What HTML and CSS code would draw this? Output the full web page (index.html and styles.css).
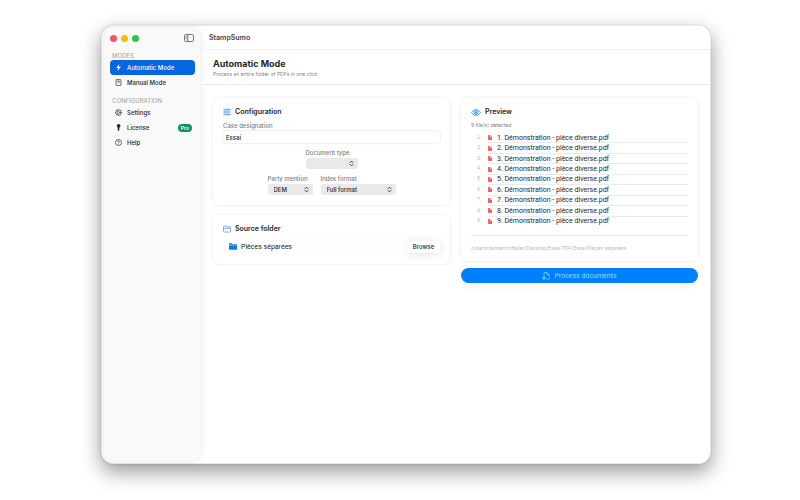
FILE: index.html
```html
<!DOCTYPE html>
<html lang="en">
<head>
<meta charset="utf-8">
<title>StampSumo</title>
<link rel="stylesheet" href="styles.css">
</head>
<body>
<svg class="sprite" aria-hidden="true">
  <symbol id="chevrons" viewBox="0 0 6 8"><path d="M1.2 3 3 1.2 4.800 3M1.2 5 3 6.800 4.800 5" fill="none" stroke="currentColor" stroke-width="1" stroke-linecap="round" stroke-linejoin="round"/></symbol>
  <symbol id="doc" viewBox="0 0 10 12"><path d="M1.500 0H5v5h5v5.500A1.500 1.500 0 0 1 8.500 12h-7A1.500 1.500 0 0 1 0 10.500v-9A1.500 1.500 0 0 1 1.500 0ZM6.200 0 10 3.900H6.200Z" fill="currentColor"/></symbol>
</svg>
<div class="window">
  <aside class="sidebar">
    <div class="controls">
      <span class="light red"></span><span class="light yellow"></span><span class="light green"></span>
      <button class="toggle" aria-label="Toggle sidebar"><svg viewBox="0 0 20 16"><g fill="none" stroke="currentColor" stroke-width="1.600"><rect x="1" y="1" width="18" height="14" rx="2.500"/><path d="M7.500 1v14M3.200 4.500h2M3.200 7h2M3.200 9.500h2"/></g></svg></button>
    </div>
    <h2 class="group">MODES</h2>
    <nav>
      <a class="item active" href="#auto"><svg viewBox="0 0 16 16"><path d="M10 0 2.500 9h4.700L6 16l7.500-9.500H8.800Z" fill="currentColor"/></svg>Automatic Mode</a>
      <a class="item" href="#manual"><svg viewBox="0 0 16 16"><g fill="none" stroke="currentColor" stroke-width="1.500"><rect x="2.500" y="1" width="11" height="14" rx="1.500"/><path d="M5.500 4.500h5M5.500 7h5"/></g></svg>Manual Mode</a>
    </nav>
    <h2 class="group second">CONFIGURATION</h2>
    <nav>
      <a class="item" href="#settings"><svg viewBox="0 0 16 16"><g fill="none" stroke="currentColor" stroke-width="1.400"><circle cx="8" cy="8" r="6.500"/><circle cx="8" cy="8" r="2.500"/><path d="M8 0v2M8 14v2M0 8h2M14 8h2M2.300 2.300l1.500 1.500M12.200 12.200l1.500 1.500M2.300 13.700l1.500-1.500M12.200 3.800l1.500-1.500M10.300 8h3.500M6.800 6 5 3M6.800 10 5 13"/></g></svg>Settings</a>
      <a class="item" href="#license"><svg viewBox="0 0 16 16"><path d="M8 0a4.300 4.300 0 0 1 2.300 8v1.500l-1 1 1 1.200-1 1.200.5 1L8 16l-1.800-1.500V8A4.300 4.300 0 0 1 8 0Z" fill="currentColor"/></svg>License<span class="badge">Pro</span></a>
      <a class="item" href="#help"><svg viewBox="0 0 16 16"><g fill="none" stroke="currentColor" stroke-width="1.500"><circle cx="8" cy="8" r="7"/><path d="M5.800 6.300C5.800 3.300 10.200 3.400 10.200 6.200 10.200 7.800 8 7.700 8 9.700M8 11v1.600"/></g></svg>Help</a>
    </nav>
  </aside>
  <main class="main">
    <div class="titlebar">StampSumo</div>
    <header class="header">
      <h1>Automatic Mode</h1>
      <p>Process an entire folder of PDFs in one click</p>
    </header>
    <div class="content">
      <div class="column">
        <section class="card config">
          <h3><svg viewBox="0 0 16 16"><rect x="1" y="1" width="14" height="14" rx="1" fill="#c4defc"/><path d="M1 3h14M1 8h14M1 13h14" stroke="#6fb0f9" stroke-width="1.800"/><path d="M10 1.500v3M5 6.500v3M10 11.500v3" stroke="#4f9df7" stroke-width="2.500"/></svg>Configuration</h3>
          <label for="case">Case designation</label>
          <input id="case" class="text" type="text" value="Essai">
          <div class="fields">
            <div class="field type"><label for="type">Document type</label><div class="select"><select id="type"><option></option></select><svg><use href="#chevrons"/></svg></div></div>
          </div>
          <div class="fields">
            <div class="field party"><label for="party">Party mention</label><div class="select"><select id="party"><option>DEM</option></select><svg><use href="#chevrons"/></svg></div></div>
            <div class="field format"><label for="format">Index format</label><div class="select"><select id="format"><option>Full format</option></select><svg><use href="#chevrons"/></svg></div></div>
          </div>
        </section>
        <section class="card source">
          <h3><svg viewBox="0 0 16 16"><path d="M1 12.500V3.500Q1 2 2.500 2H6l1.500 1.500H13.500Q15 3.500 15 5v7.500Q15 14 13.500 14h-11Q1 14 1 12.500ZM1 6.500h14" fill="none" stroke="#3c93f8" stroke-width="1.400"/></svg>Source folder</h3>
          <div class="picker">
            <div class="folder"><svg viewBox="0 0 16 14"><path d="M0 3.500V2Q0 .5 1.500.5H5.500L7 2h7Q16 2 16 3.500ZM0 4.700h16V12q0 1.500-1.500 1.500h-13Q0 13.500 0 12Z" fill="#087bf3"/></svg>Pièces séparées</div>
            <button class="browse">Browse</button>
          </div>
        </section>
      </div>
      <div class="column">
        <section class="card preview">
          <h3><svg viewBox="0 0 20 14"><g fill="none" stroke="#2487f7" stroke-width="1.600"><path d="M1 7Q5 1 10 1t9 6q-4 6-9 6T1 7Z"/><circle cx="10" cy="7" r="3.800"/></g><circle cx="10" cy="7" r="2" fill="#2487f7"/></svg>Preview</h3>
          <p class="count">9 file(s) detected</p>
          <ol class="files">
            <li><span class="num">1.</span><svg><use href="#doc"/></svg>1. Démonstration - pièce diverse.pdf</li>
            <li><span class="num">2.</span><svg><use href="#doc"/></svg>2. Démonstration - pièce diverse.pdf</li>
            <li><span class="num">3.</span><svg><use href="#doc"/></svg>3. Démonstration - pièce diverse.pdf</li>
            <li><span class="num">4.</span><svg><use href="#doc"/></svg>4. Démonstration - pièce diverse.pdf</li>
            <li><span class="num">5.</span><svg><use href="#doc"/></svg>5. Démonstration - pièce diverse.pdf</li>
            <li><span class="num">6.</span><svg><use href="#doc"/></svg>6. Démonstration - pièce diverse.pdf</li>
            <li><span class="num">7.</span><svg><use href="#doc"/></svg>7. Démonstration - pièce diverse.pdf</li>
            <li><span class="num">8.</span><svg><use href="#doc"/></svg>8. Démonstration - pièce diverse.pdf</li>
            <li><span class="num">9.</span><svg><use href="#doc"/></svg>9. Démonstration - pièce diverse.pdf</li>
          </ol>
          <p class="path">/Users/damienhottelier/Desktop/Essai PDF/Essai/Pièces séparées</p>
        </section>
        <button class="process"><svg viewBox="0 0 16 16"><g fill="none" stroke="currentColor" stroke-width="1.400"><path d="M4 8V2.500Q4 1 5.500 1H10l4.500 4.500V13q0 1.500-1.500 1.500H8.500M10 1v4.500h4.500"/><circle cx="4" cy="12" r="2.200"/><path d="M4 8.500v7M.5 12h7"/></g></svg>Process documents</button>
      </div>
    </div>
  </main>
</div>
</body>
</html>
```
FILE: styles.css
```css
* { box-sizing: border-box; }

body {
  margin: 0;
  min-height: 100vh;
  padding: 25px 89px 36px 101px;
  display: flex;
  background: #fff;
  color: #262626;
  font: 500 6px/8px Inter, "Liberation Sans", sans-serif;
}

h1, h2, h3, p, ol { margin: 0; padding: 0; }
button, input, select { font: inherit; color: inherit; border: 0; margin: 0; }
a { color: inherit; text-decoration: none; }
svg { display: block; flex: none; }
.sprite { position: absolute; width: 0; height: 0; }

.window {
  flex: 1;
  display: flex;
  background: #fff;
  border: 1px solid #e9e9e9;
  border-radius: 12px;
  box-shadow: 0 8px 20px rgba(0, 0, 0, .4), 0 0 2px rgba(0, 0, 0, .12);
}

/* Sidebar */
.sidebar {
  width: 96px;
  margin: 2px;
  padding: 6px 5px 0 6px;
  background: #f9f9f9;
  border-radius: 10px;
  box-shadow: 0 0 8px rgba(0, 0, 0, .1);
}
.controls { display: flex; align-items: center; gap: 4px; height: 8px; padding-right: 1px; }
.light { width: 7px; height: 7px; border-radius: 50%; }
.red { background: #f4575b; }
.yellow { background: #f6bd0e; }
.green { background: #30c150; }
.toggle { margin-left: auto; padding: 0; background: none; color: #555; }
.toggle svg { width: 10px; height: 8px; }
.group { margin: 10px 0 0 2px; font-size: 6px; font-weight: 500; color: #ababab; }
.second { margin-top: 7px; }
.item {
  display: flex;
  align-items: center;
  gap: 5px;
  height: 15px;
  padding: 0 3px 0 5px;
  border-radius: 4px;
}
.item svg { width: 7px; height: 7px; }
.active { background: #0566e2; color: #fff; }
.badge {
  margin-left: auto;
  padding: 0 3px;
  border-radius: 4px;
  background: #119263;
  color: #fff;
  font-size: 5px;
  font-weight: 600;
}

/* Main area */
.main { flex: 1; min-width: 0; }
.titlebar {
  height: 24px;
  padding: 0 7px;
  border-bottom: 1px solid #efefef;
  font-size: 7px;
  line-height: 24px;
  font-weight: 600;
  color: #444;
}
.header { height: 35px; padding: 8px 11px 0; border-bottom: 1px solid #ebebeb; }
h1 { font-size: 9px; line-height: 12px; font-weight: 700; }
.header p { font-size: 5px; line-height: 8px; font-weight: 400; color: #848484; }

.content { display: flex; align-items: flex-start; gap: 11px; padding: 13px 12px 13px 11px; }
.column { flex: 1; min-width: 0; display: flex; flex-direction: column; }
.card {
  padding: 9px 10px;
  border-radius: 6px;
  background: #fff;
  box-shadow: 0 0 3px rgba(0, 0, 0, .12);
}
h3 { display: flex; align-items: center; gap: 4px; font-size: 7px; line-height: 10px; font-weight: 600; }
h3 svg { width: 8px; height: 8px; }
label { display: block; color: #808080; }

.config { padding-bottom: 10px; }
.config h3 { margin-bottom: 5px; }
.text {
  width: 100%;
  height: 12px;
  margin-top: 1px;
  padding: 0 3px;
  border-radius: 3px;
  background: #fff;
  box-shadow: 0 0 2px rgba(0, 0, 0, .2);
  display: block;
}
.fields { display: flex; justify-content: center; gap: 8px; margin-top: 6px; }
.select { position: relative; margin-top: 1px; }
.select select {
  display: block;
  width: 100%;
  height: 11px;
  padding: 0 6px;
  appearance: none;
  border-radius: 3px;
  background: #e9e9e9;
}
.select svg { position: absolute; right: 4px; top: 2px; width: 5px; height: 7px; pointer-events: none; }
.type { width: 52px; }
.party { width: 45px; }
.format { width: 75px; }

.source { margin-top: 10px; }
.picker { display: flex; gap: 5px; margin-top: 5px; padding-bottom: 1px; }
.folder {
  flex: 1;
  display: flex;
  align-items: center;
  gap: 4px;
  height: 15px;
  padding: 0 6px;
  border-radius: 3px;
  background: #fdfdfd;
  font: 400 7px/8px Roboto, sans-serif;
}
.folder svg { width: 8px; height: 7px; }
.browse {
  width: 33px;
  height: 12px;
  margin-top: 2px;
  padding: 0;
  border-radius: 3px;
  background: #fff;
  box-shadow: 0 1px 8px rgba(0, 0, 0, .12);
}

.preview h3 svg { width: 10px; height: 7px; }
.count { margin-top: 4px; font-size: 5px; font-weight: 400; color: #808080; }
.files { display: grid; grid-auto-rows: 1fr; height: 94px; margin-top: 4px; list-style: none; }
.files li {
  display: flex;
  align-items: center;
  margin-left: 17px;
  border-bottom: 1px solid #ebebeb;
  font: 400 7px/8px Roboto, sans-serif;
}
.files li:last-child { border-color: transparent; }
.files svg { width: 4px; height: 5px; margin: 0 5px 0 4px; color: #f56164; }
.num { width: 7px; margin-left: -11px; font: 400 5px/8px "Liberation Mono", monospace; color: #b5b5b5; }
.path {
  margin-top: 8px;
  padding-top: 8px;
  border-top: 1px solid #e9e9e9;
  font-size: 5px;
  font-weight: 400;
  color: #b8b8b8;
}
.process {
  display: flex;
  align-items: center;
  justify-content: center;
  gap: 4px;
  height: 15px;
  margin-top: 7px;
  border-radius: 8px;
  background: #0080fc;
  color: #7fe0ff;
  font: 400 7px/8px Roboto, sans-serif;
  box-shadow: 0 3px 10px rgba(0, 0, 0, .06);
}
.process svg { width: 8px; height: 8px; }
```
